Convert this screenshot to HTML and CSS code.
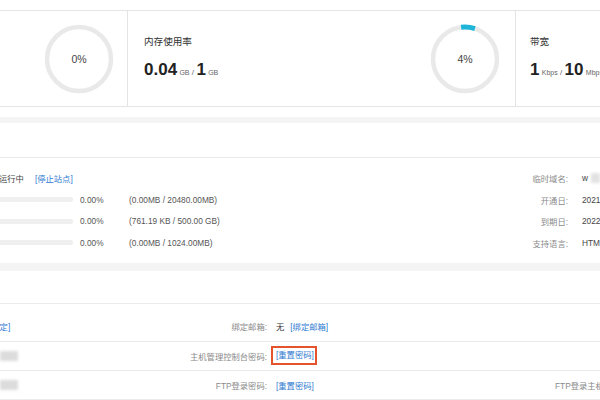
FILE: index.html
```html
<!DOCTYPE html>
<html lang="zh">
<head>
<meta charset="utf-8">
<title>主机概况</title>
<link rel="stylesheet" href="styles.css">
</head>
<body>
<div class="panel panel-top">
  <div class="stats">
    <div class="stat stat-cpu">
      <div class="ring">
        <svg viewBox="0 0 70 70" width="70" height="70"><circle cx="35" cy="35" r="32" class="ring-track"/></svg>
        <span class="ring-label">0%</span>
      </div>
    </div>
    <div class="stat stat-mem">
      <div class="stat-text">
        <div class="stat-title">内存使用率</div>
        <div class="stat-value"><b>0.04</b> <small>GB</small> <i>/</i> <b>1</b> <small>GB</small></div>
      </div>
      <div class="ring">
        <svg viewBox="0 0 70 70" width="70" height="70"><circle cx="35" cy="35" r="32" class="ring-track"/><path class="ring-fill" d="M31.1 3.24 A32 32 0 0 1 44.9 4.57"/></svg>
        <span class="ring-label">4%</span>
      </div>
    </div>
    <div class="stat stat-bw">
      <div class="stat-text">
        <div class="stat-title">带宽</div>
        <div class="stat-value"><b>1</b> <small>Kbps</small> <i>/</i> <b>10</b> <small>Mbps</small></div>
      </div>
    </div>
  </div>
</div>

<div class="panel panel-site">
  <div class="panel-head"></div>
  <div class="site-body">
    <div class="site-left">
      <div class="status"><span class="status-text">运行中</span><a class="link">[停止站点]</a></div>
      <div class="bar"></div><span>0.00%</span><span>(0.00MB / 20480.00MB)</span>
      <div class="bar"></div><span>0.00%</span><span>(761.19 KB / 500.00 GB)</span>
      <div class="bar"></div><span>0.00%</span><span>(0.00MB / 1024.00MB)</span>
    </div>
    <div class="site-right">
      <span class="label">临时域名:</span><span class="value">w<span class="blur blur-short"></span></span>
      <span class="label">开通日:</span><span class="value">2021-06-01</span>
      <span class="label">到期日:</span><span class="value">2022-06-01</span>
      <span class="label">支持语言:</span><span class="value">HTML/PHP</span>
    </div>
  </div>
</div>

<div class="panel panel-account">
  <div class="panel-head panel-head-sm"></div>
  <div class="acc-row acc-row-first">
    <div class="acc-main"><a class="link link-cut">[绑定]</a><span class="label">绑定邮箱:</span></div>
    <div class="acc-value">无 <a class="link">[绑定邮箱]</a></div>
    <div class="acc-side"></div>
  </div>
  <div class="acc-row">
    <div class="acc-main"><span class="blur"></span><span class="label">主机管理控制台密码:</span></div>
    <div class="acc-value"><a class="link link-boxed">[重置密码]</a></div>
    <div class="acc-side"></div>
  </div>
  <div class="acc-row">
    <div class="acc-main"><span class="blur"></span><span class="label">FTP登录密码:</span></div>
    <div class="acc-value"><a class="link">[重置密码]</a></div>
    <div class="acc-side"><span class="label">FTP登录主机地址:</span></div>
  </div>
</div>
</body>
</html>
```

FILE: styles.css
```css
html, body {
  margin: 0;
  padding: 0;
}
body {
  width: 600px;
  height: 400px;
  overflow: hidden;
  background: #f4f4f4;
  font-family: "Liberation Sans", "Noto Sans CJK SC", sans-serif;
  font-size: 8.3px;
  color: #444;
}
.panel {
  background: #fff;
  margin-bottom: 8px;
}
.panel-top {
  padding: 10px 0;
  margin-bottom: 6px;
}
.stats {
  display: flex;
  height: 97px;
  box-sizing: border-box;
  border-top: 1px solid #e4e4e4;
  border-bottom: 1px solid #e4e4e4;
}
.stat {
  display: flex;
  align-items: center;
  box-sizing: border-box;
}
.stat-cpu {
  width: 128px;
  flex: none;
  justify-content: flex-end;
  padding-right: 13px;
  border-right: 1px solid #e4e4e4;
}
.stat-mem {
  width: 388px;
  flex: none;
  justify-content: space-between;
  padding: 0 15px 0 16px;
  border-right: 1px solid #e4e4e4;
}
.stat-bw {
  flex: 1;
  padding-left: 14px;
  white-space: nowrap;
}
.ring {
  display: grid;
  width: 70px;
  height: 70px;
}
.ring > * {
  grid-area: 1 / 1;
}
.ring-track {
  fill: none;
  stroke: #e9e9e9;
  stroke-width: 4.5;
}
.ring-fill {
  fill: none;
  stroke: #1eb5d8;
  stroke-width: 5;
}
.ring-label {
  place-self: center;
  font-size: 10.5px;
  color: #444;
}
.stat-text {
  display: flex;
  flex-direction: column;
  padding-top: 2px;
}
.stat-title {
  font-size: 9.6px;
  line-height: 14px;
  color: #333;
}
.stat-value {
  margin-top: 10px;
  line-height: 22px;
  color: #222;
  white-space: nowrap;
}
.stat-value b {
  font-size: 17px;
  font-weight: bold;
}
.stat-value small {
  font-size: 7px;
  color: #666;
}
.stat-value i {
  font-style: normal;
  font-size: 8px;
  color: #666;
}

.panel-head {
  height: 34px;
  border-bottom: 1px solid #ececec;
}
.panel-head-sm {
  height: 32px;
}
.panel-site {
  margin-bottom: 8px;
}
.site-body {
  display: flex;
  padding: 9px 0;
  white-space: nowrap;
}
.site-left {
  display: grid;
  grid-template-columns: 73px 42px auto;
  grid-auto-rows: 21.7px;
  column-gap: 7px;
  align-items: center;
  color: #555;
}
.status {
  grid-column: 1 / -1;
  display: flex;
  gap: 11px;
  color: #444;
}
.status-text {
  margin-left: -1px;
}
.bar {
  height: 5px;
  background: #efefef;
  border-radius: 0 3px 3px 0;
}
.link {
  color: #2f7bd1;
  cursor: pointer;
}
.site-right {
  margin-left: auto;
  display: grid;
  grid-template-columns: 60px 18px;
  grid-auto-rows: 21.7px;
  column-gap: 14px;
  align-items: center;
}
.label {
  color: #8a8a8a;
  text-align: right;
  white-space: nowrap;
}
.value {
  color: #444;
  white-space: nowrap;
  display: flex;
  align-items: center;
}
.blur {
  display: inline-block;
  width: 18px;
  height: 10px;
  background: #dcdcdc;
  filter: blur(1.5px);
}
.blur-short {
  width: 14px;
  margin-left: 3px;
  background: #e2e2e2;
}

.panel-account {
  margin-bottom: 0;
}
.acc-row {
  display: grid;
  grid-template-columns: 267px 288px 1fr;
  height: 28px;
  align-items: center;
  border-bottom: 1px solid #ececec;
  white-space: nowrap;
}
.acc-row-first {
  height: 38px;
  padding-top: 8px;
  box-sizing: border-box;
}
.acc-main {
  display: flex;
  justify-content: space-between;
  align-items: center;
}
.acc-value {
  padding-left: 9px;
  color: #333;
  display: flex;
  align-items: center;
  gap: 6px;
}
.link-cut {
  margin-left: -11px;
}
.link-boxed {
  margin-left: -5px;
  padding: 2px 1px 2px 3px;
  border: 2px solid #e4532c;
  line-height: 11px;
}
.acc-side {
  overflow: hidden;
}
.acc-side .label {
  text-align: left;
}
```
